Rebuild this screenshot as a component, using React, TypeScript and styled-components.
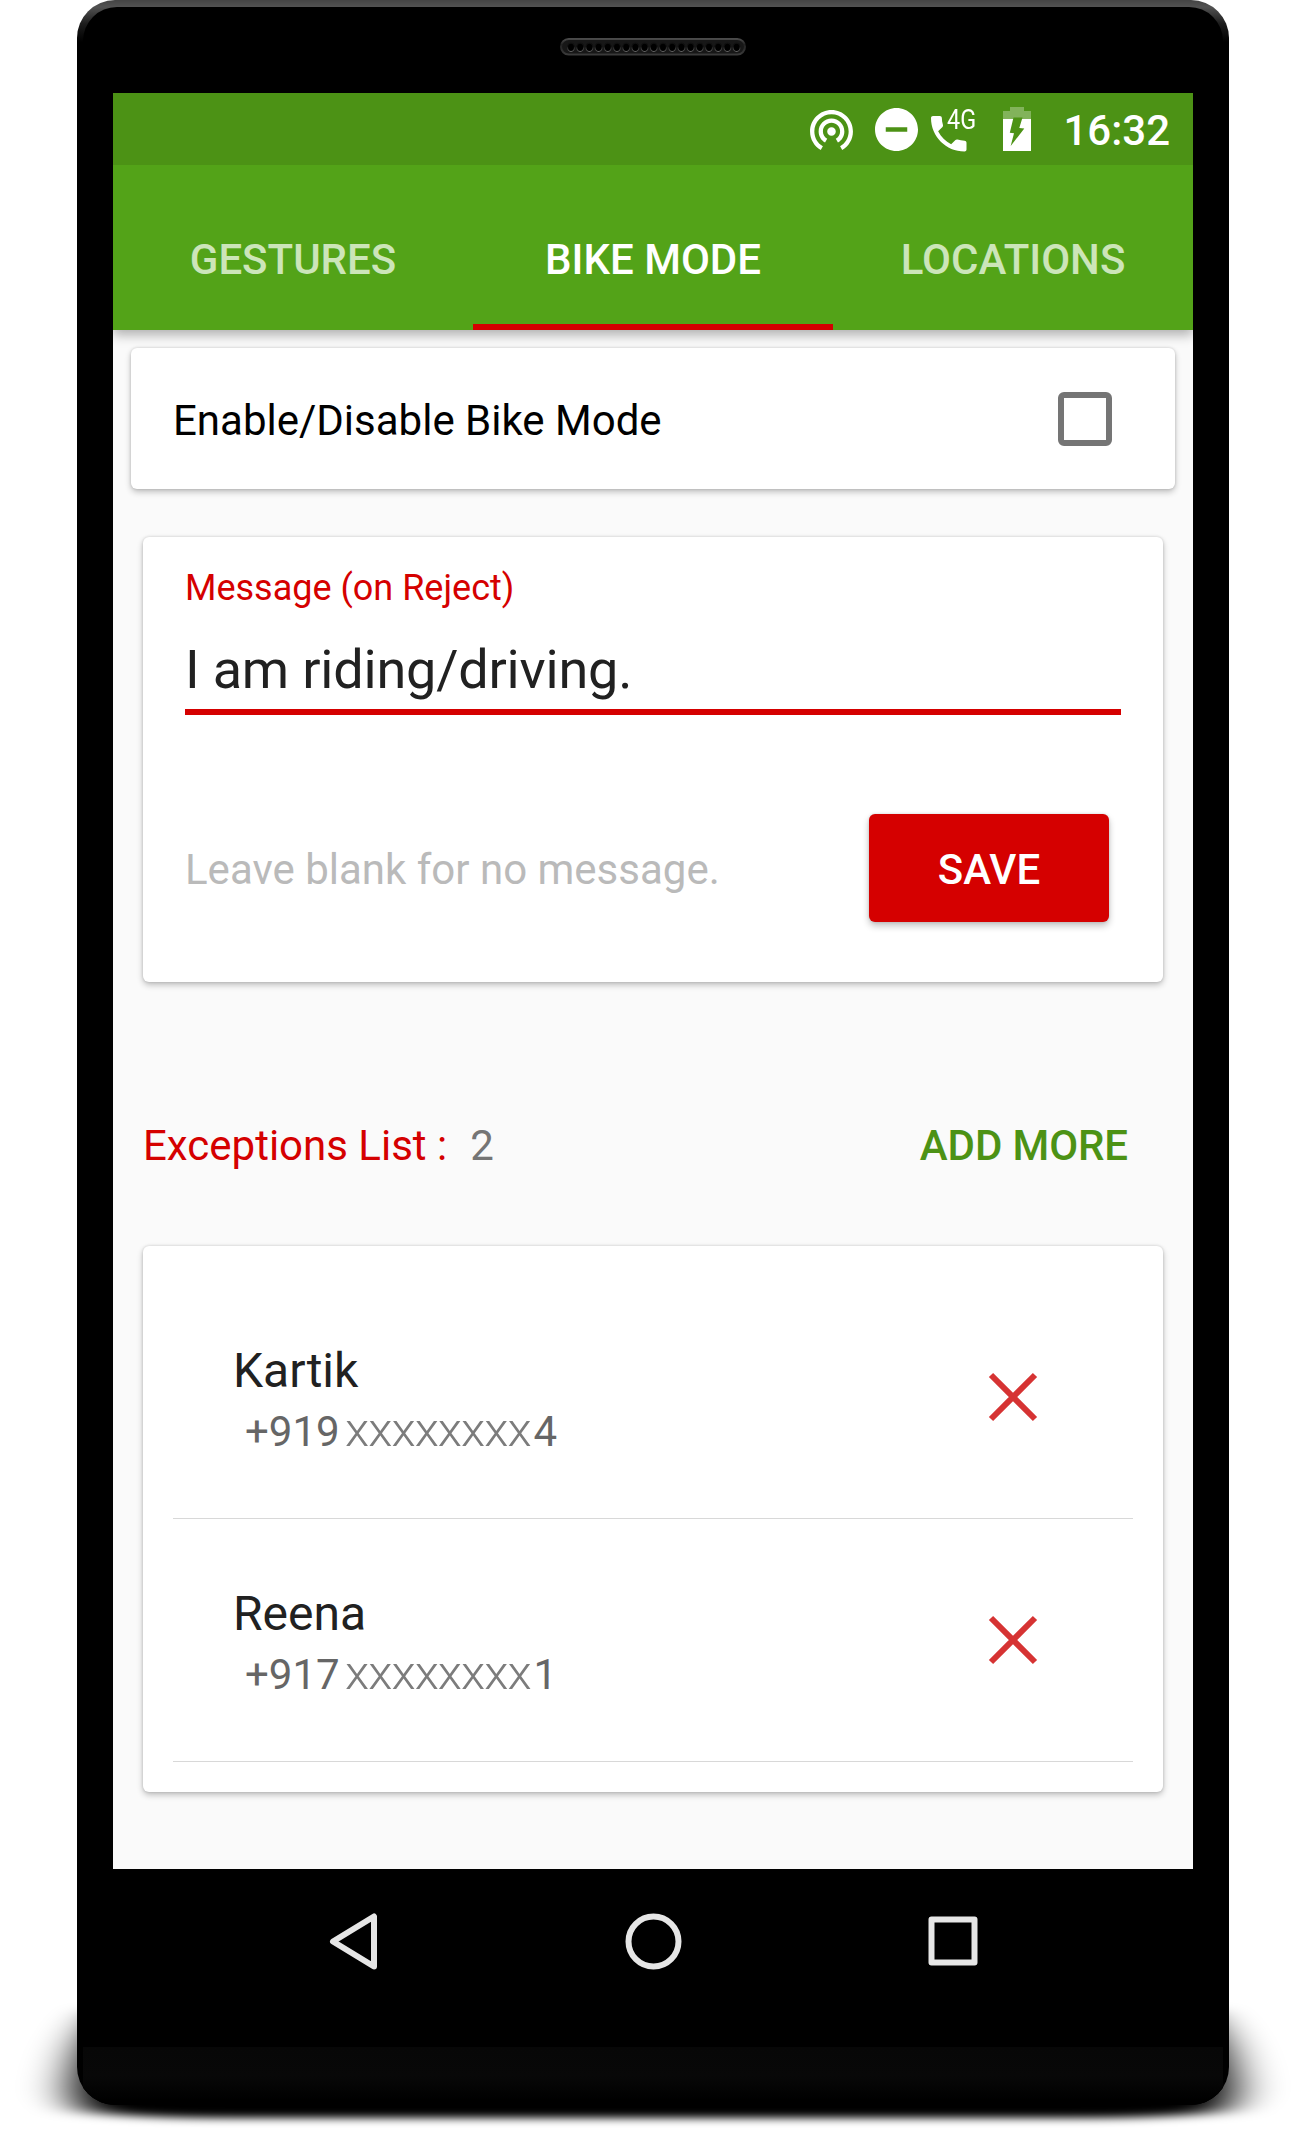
import React from "react";
import styled, { createGlobalStyle } from "styled-components";

const GlobalStyle = createGlobalStyle`
  *, *::before, *::after { box-sizing: border-box; }
  body { margin: 0; background: #fff; }
`;

const red = "#d50000";

const Stage = styled.main`
  position: relative;
  width: 1305px;
  height: 2130px;
  padding-left: 77px;
  overflow: hidden;
  background: #fff;
  font-family: Roboto, "Noto Sans", sans-serif;
`;

const GroundShadow = styled.svg`
  position: absolute;
  left: 0;
  bottom: 0;
`;

const Phone = styled.div`
  position: relative;
  width: 1152px;
  height: 2105px;
  padding: 7px 6px 0;
  border-radius: 38px;
  overflow: hidden;
  background: linear-gradient(#444 0, #525252 7px, #1c1c1c 24px, #000 42px);
`;

const Body = styled.div`
  display: flex;
  flex-direction: column;
  height: 2098px;
  padding: 0 30px;
  border-radius: 34px 34px 0 0;
  background: #000;
`;

const Earpiece = styled.div`
  display: flex;
  justify-content: center;
  height: 86px;
  padding-top: 31px;
`;

const Screen = styled.div`
  width: 1080px;
  height: 1776px;
  background: #fafafa;
`;

const StatusBar = styled.div`
  display: flex;
  align-items: center;
  justify-content: flex-end;
  height: 72px;
  padding-right: 23px;
  background: #4c9215;
  color: #fff;
`;

const StatusItem = styled.div<{ $gap: number; $drop?: number }>`
  display: flex;
  margin-left: ${(p) => p.$gap}px;
  padding-top: ${(p) => p.$drop ?? 0}px;
`;

const CallSignal = styled.div`
  display: flex;
  align-items: flex-end;
  width: 43px;
  height: 43px;
  position: relative;
`;

const NetworkType = styled.span`
  position: absolute;
  left: 16px;
  top: -4px;
  font-size: 27.5px;
  line-height: 30px;
  transform: scaleX(0.85);
  transform-origin: left;
`;

const Clock = styled.span`
  width: 108px;
  font-size: 42px;
  font-weight: 500;
  line-height: 50px;
  white-space: nowrap;
  text-align: right;
`;

const Tabs = styled.nav`
  position: relative;
  z-index: 1;
  display: grid;
  grid-template-columns: repeat(3, 1fr);
  height: 165px;
  background: #53a318;
  box-shadow: 0 5px 11px rgba(0, 0, 0, 0.3);
  clip-path: inset(0 0 -30px 0);
`;

const Tab = styled.a<{ $active?: boolean }>`
  display: flex;
  align-items: center;
  justify-content: center;
  padding-top: 31px;
  border-bottom: 6px solid ${(p) => (p.$active ? red : "transparent")};
  color: ${(p) => (p.$active ? "#fff" : "#cce5b9")};
  font-size: 42px;
  font-weight: 500;
  line-height: 50px;
`;

const Card = styled.section`
  border-radius: 6px;
  background: #fff;
  box-shadow: 0 3px 6px rgba(0, 0, 0, 0.24), 0 0 3px rgba(0, 0, 0, 0.16);
`;

const ToggleCard = styled(Card)`
  display: flex;
  align-items: center;
  justify-content: space-between;
  height: 141px;
  margin: 18px 18px 48px;
  padding: 0 63px 0 42px;
  color: #000;
  font-size: 42px;
  line-height: 50px;
`;

const ToggleLabel = styled.span`
  padding-top: 4px;
`;

const Checkbox = styled.span`
  width: 54px;
  height: 54px;
  border: 6px solid #757575;
  border-radius: 6px;
`;

const MessageCard = styled(Card)`
  height: 445px;
  margin: 0 30px;
  padding: 30px 42px 0;
`;

const FieldLabel = styled.div`
  color: ${red};
  font-size: 36px;
  line-height: 42px;
`;

const FieldValue = styled.div`
  margin-top: 29px;
  padding-bottom: 8px;
  border-bottom: 6px solid ${red};
  color: #212121;
  font-size: 54px;
  line-height: 63px;
  letter-spacing: -0.2px;
`;

const SaveRow = styled.div`
  display: flex;
  align-items: center;
  justify-content: space-between;
  margin-top: 99px;
  padding-right: 12px;
`;

const Hint = styled.span`
  padding-top: 4px;
  color: #bababa;
  font-size: 42px;
  line-height: 50px;
`;

const SaveButton = styled.button`
  width: 240px;
  height: 108px;
  padding: 4px 0 0;
  border: 0;
  border-radius: 6px;
  background: ${red};
  box-shadow: 0 4px 7px rgba(0, 0, 0, 0.24), 0 0 3px rgba(0, 0, 0, 0.14);
  color: #fff;
  font-family: inherit;
  font-size: 42px;
  font-weight: 500;
  line-height: 50px;
`;

const ListHeader = styled.div`
  display: flex;
  align-items: center;
  height: 50px;
  margin: 139px 65px 75px 30px;
  font-size: 42px;
  line-height: 50px;
`;

const ListTitle = styled.span`
  color: ${red};
`;

const ListCount = styled.span`
  margin-left: 23px;
  color: #757575;
`;

const AddMore = styled.a`
  margin-left: auto;
  color: #4c9215;
  font-weight: 500;
  letter-spacing: -0.1px;
`;

const ContactCard = styled(Card)`
  margin: 0 30px;
  padding: 30px;
  height: 546px;
`;

const ContactRow = styled.div`
  display: flex;
  align-items: center;
  justify-content: space-between;
  height: 243px;
  padding: 0 95px 0 60px;
  border-bottom: 1px solid #d8d8d8;
`;

const ContactText = styled.div`
  display: flex;
  flex-direction: column;
  gap: 6px;
  padding-top: 3px;
`;

const ContactName = styled.div`
  color: #212121;
  font-size: 48px;
  line-height: 56px;
`;

const ContactNumber = styled.div`
  display: flex;
  align-items: baseline;
  height: 50px;
  padding-left: 12px;
  color: #666;
  font-size: 42px;
  line-height: 50px;
`;

const Masked = styled.span`
  margin: 0 17px 0 5px;
  color: #7c7c7c;
  font-size: 46px;
  font-weight: 300;
  letter-spacing: -0.9px;
  transform: scaleX(1.08);
  transform-origin: left;
`;

const NavBar = styled.div`
  display: flex;
  align-items: center;
  justify-content: space-between;
  height: 178px;
  padding: 0 215px 34px 216px;
`;

const Chin = styled.div`
  height: 58px;
  margin: 0 -30px;
  background: linear-gradient(#070707 0, #080808 50%, #000 92%);
`;

const contacts = [
  { name: "Kartik", prefix: "+919", mask: "xxxxxxxx", suffix: "4" },
  { name: "Reena", prefix: "+917", mask: "xxxxxxxx", suffix: "1" },
];

const SpeakerGrille = () => (
  <svg width="186" height="18" viewBox="0 0 186 18">
    <defs>
      <linearGradient id="rim" x1="0" y1="0" x2="0" y2="1">
        <stop offset="0" stopColor="#4a4a4a" />
        <stop offset="0.35" stopColor="#222" />
        <stop offset="1" stopColor="#3a3a3a" />
      </linearGradient>
      <linearGradient id="hole" x1="0" y1="0" x2="0" y2="1">
        <stop offset="0.4" stopColor="#111" />
        <stop offset="1" stopColor="#666" />
      </linearGradient>
    </defs>
    <rect x="1" y="1" width="184" height="15.5" rx="7.7" fill="#171717" stroke="url(#rim)" strokeWidth="2" />
    {Array.from({ length: 19 }, (_, i) => (
      <ellipse key={i} cx={11 + i * 9.2} cy="9.3" rx="3.5" ry="4.2" fill="#000" stroke="url(#hole)" strokeWidth="1.1" />
    ))}
  </svg>
);

const HotspotIcon = () => (
  <svg width="43" height="40" viewBox="2 3 20 18.65" fill="#fff">
    <path d="M12 11c-1.1 0-2 .9-2 2s.9 2 2 2 2-.9 2-2-.9-2-2-2zm6 2c0-3.31-2.69-6-6-6s-6 2.69-6 6c0 2.22 1.21 4.15 3 5.19l1-1.74c-1.19-.7-2-1.97-2-3.45 0-2.21 1.79-4 4-4s4 1.79 4 4c0 1.48-.81 2.75-2 3.45l1 1.74c1.79-1.04 3-2.97 3-5.19zM12 3C6.48 3 2 7.48 2 13c0 3.7 2.01 6.92 4.99 8.65l1-1.73C5.61 18.53 4 15.96 4 13c0-4.42 3.58-8 8-8s8 3.58 8 8c0 2.96-1.61 5.53-4 6.92l1 1.73c2.99-1.73 5-4.95 5-8.65 0-5.52-4.48-10-10-10z" />
  </svg>
);

const DoNotDisturbIcon = () => (
  <svg width="43" height="43" viewBox="2 2 20 20" fill="#fff">
    <path d="M12 2C6.48 2 2 6.48 2 12s4.48 10 10 10 10-4.48 10-10S17.52 2 12 2zm5 11H7v-2h10v2z" />
  </svg>
);

const CallIcon = () => (
  <svg width="35.5" height="35.5" viewBox="3 3 18 18" fill="#fff">
    <path d="M6.62 10.79c1.44 2.83 3.76 5.14 6.59 6.59l2.2-2.2c.27-.27.67-.36 1.02-.24 1.12.37 2.33.57 3.57.57.55 0 1 .45 1 1V20c0 .55-.45 1-1 1-9.39 0-17-7.61-17-17 0-.55.45-1 1-1h3.5c.55 0 1 .45 1 1 0 1.25.2 2.45.57 3.57.11.35.03.74-.25 1.02l-2.2 2.2z" />
  </svg>
);

const BatteryIcon = () => (
  <svg width="28" height="44" viewBox="0 0 28 44">
    <path d="M7 0h14v4h7v8H0V4h7z" fill="#fff" fillOpacity="0.3" />
    <path d="M0 12h28v32H0z" fill="#fff" />
    <path d="M10.5 10.5h9L16.3 21l5 .4L7.7 39 11 26.3l-4.2-.5z" fill="#4c9215" />
  </svg>
);

const RemoveIcon = () => (
  <svg width="50" height="50" viewBox="0 0 50 50" stroke="#d63333" strokeWidth="6" fill="none">
    <path d="M3 3l44 44M47 3l-44 44" />
  </svg>
);

const BackIcon = () => (
  <svg width="49" height="57" viewBox="0 0 49 57" fill="none" stroke="#e6e6e6" strokeWidth="6" strokeLinejoin="round">
    <path d="M45 3.5v50L4 28.5z" />
  </svg>
);

const HomeIcon = () => (
  <svg width="57" height="57" viewBox="0 0 57 57" fill="none" stroke="#e6e6e6" strokeWidth="6">
    <circle cx="28.5" cy="28.5" r="25" />
  </svg>
);

const RecentsIcon = () => (
  <svg width="50" height="50" viewBox="0 0 50 50" fill="none" stroke="#e6e6e6" strokeWidth="6" strokeLinejoin="round">
    <path d="M3.5 3.5h43v43h-43z" />
  </svg>
);

export default function App() {
  return (
    <>
      <GlobalStyle />
      <Stage>
        <GroundShadow width="1305" height="150" viewBox="0 1980 1305 150">
          <defs>
            <filter id="soft" filterUnits="userSpaceOnUse" x="-100" y="1900" width="1505" height="300">
              <feGaussianBlur stdDeviation="24 4" />
            </filter>
          </defs>
          <path
            d="M110 2010C88 2030 76 2055 72 2085Q72 2106 90 2112Q140 2118 230 2118H1076Q1166 2118 1216 2112Q1234 2106 1234 2085C1230 2055 1218 2030 1196 2010z"
            filter="url(#soft)"
          />
        </GroundShadow>
        <Phone>
          <Body>
            <Earpiece>
              <SpeakerGrille />
            </Earpiece>
            <Screen>
              <StatusBar>
                <StatusItem $gap={0} $drop={2}><HotspotIcon /></StatusItem>
                <StatusItem $gap={22} $drop={1}><DoNotDisturbIcon /></StatusItem>
                <StatusItem $gap={13} $drop={2}>
                  <CallSignal>
                    <CallIcon />
                    <NetworkType>4G</NetworkType>
                  </CallSignal>
                </StatusItem>
                <StatusItem $gap={29}><BatteryIcon /></StatusItem>
                <StatusItem $gap={31} $drop={3}><Clock>16:32</Clock></StatusItem>
              </StatusBar>
              <Tabs>
                <Tab>GESTURES</Tab>
                <Tab $active>BIKE MODE</Tab>
                <Tab>LOCATIONS</Tab>
              </Tabs>
              <ToggleCard>
                <ToggleLabel>Enable/Disable Bike Mode</ToggleLabel>
                <Checkbox />
              </ToggleCard>
              <MessageCard>
                <FieldLabel>Message (on Reject)</FieldLabel>
                <FieldValue>I am riding/driving.</FieldValue>
                <SaveRow>
                  <Hint>Leave blank for no message.</Hint>
                  <SaveButton>SAVE</SaveButton>
                </SaveRow>
              </MessageCard>
              <ListHeader>
                <ListTitle>Exceptions List :</ListTitle>
                <ListCount>2</ListCount>
                <AddMore>ADD MORE</AddMore>
              </ListHeader>
              <ContactCard>
                {contacts.map((c) => (
                  <ContactRow key={c.name}>
                    <ContactText>
                      <ContactName>{c.name}</ContactName>
                      <ContactNumber>
                        {c.prefix}
                        <Masked>{c.mask}</Masked>
                        {c.suffix}
                      </ContactNumber>
                    </ContactText>
                    <RemoveIcon />
                  </ContactRow>
                ))}
              </ContactCard>
            </Screen>
            <NavBar>
              <BackIcon />
              <HomeIcon />
              <RecentsIcon />
            </NavBar>
            <Chin />
          </Body>
        </Phone>
      </Stage>
    </>
  );
}
